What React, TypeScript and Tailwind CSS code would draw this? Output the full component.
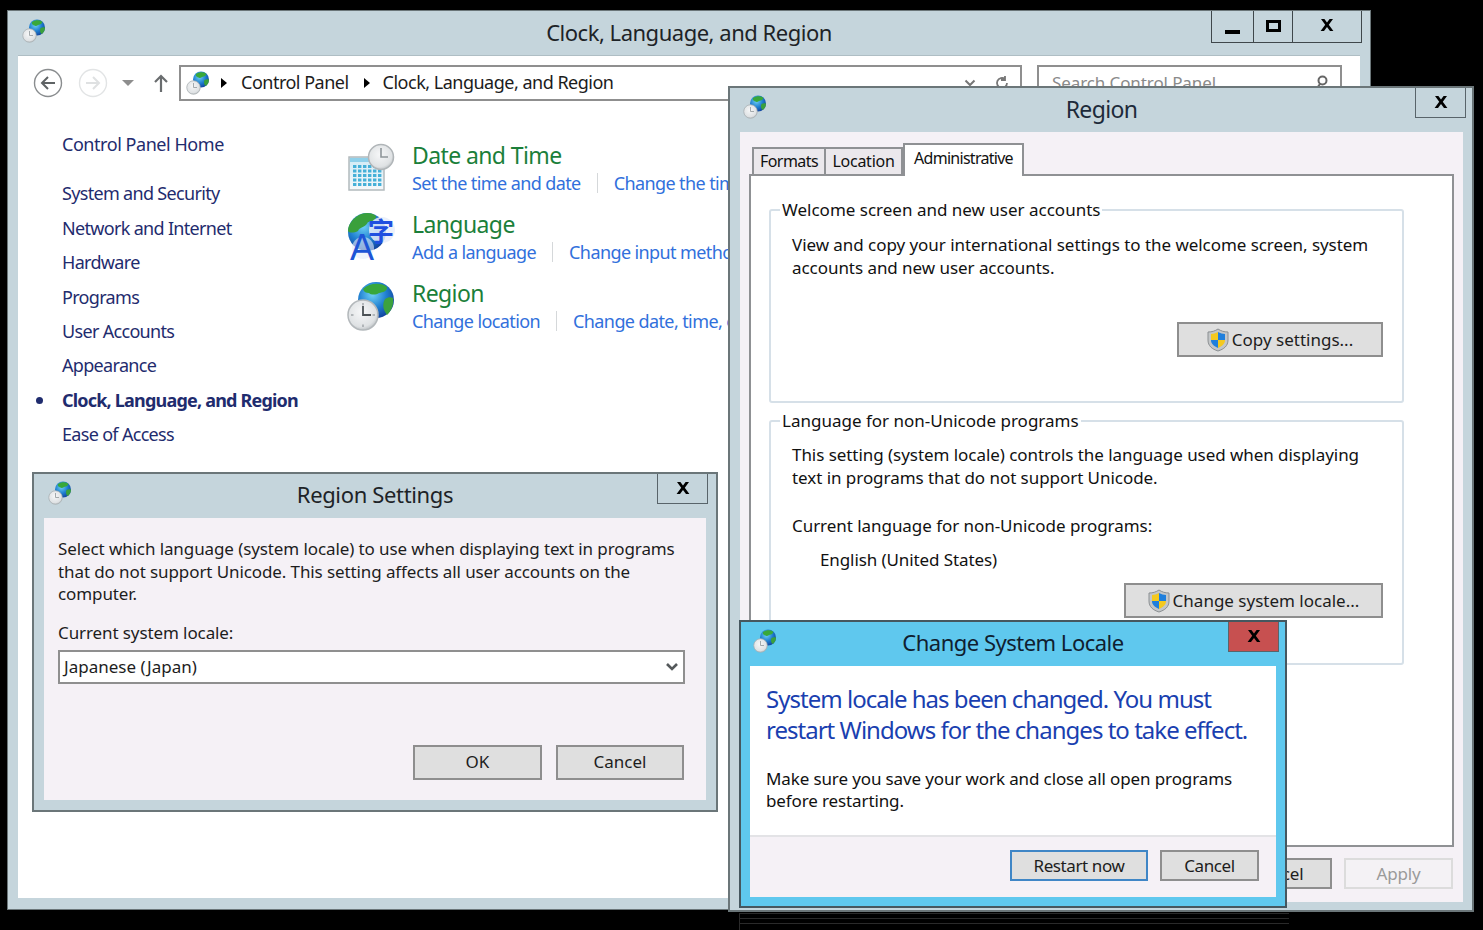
import type { ReactNode } from "react";

// ─── Icons ───────────────────────────────────────────────────────────────────

function Defs() {
  return (
    <svg className="absolute h-0 w-0">
      <defs>
        <radialGradient id="globe" cx="40%" cy="35%" r="70%">
          <stop offset="0%" stopColor="#6fd0f5" />
          <stop offset="55%" stopColor="#1f7fd0" />
          <stop offset="100%" stopColor="#123f9a" />
        </radialGradient>
        <radialGradient id="clock" cx="45%" cy="40%" r="65%">
          <stop offset="0%" stopColor="#f6f7f8" />
          <stop offset="75%" stopColor="#dfe2e4" />
          <stop offset="100%" stopColor="#b4b9bc" />
        </radialGradient>
        <linearGradient id="cal" x1="0" y1="0" x2="0" y2="1">
          <stop offset="0%" stopColor="#cfeaf5" />
          <stop offset="100%" stopColor="#f5f8fa" />
        </linearGradient>
      </defs>
    </svg>
  );
}

function GlobeClock({ size = 24 }: { size?: number }) {
  return (
    <svg width={size} height={size} viewBox="0 0 48 48" className="shrink-0">
      <circle cx="30" cy="17" r="16" fill="url(#globe)" />
      <path d="M20 6c6-4 14-5 20-1 2 4-3 6-8 7-3 3-8 2-9 0-3-1-4-3-3-6z" fill="#39a83a" />
      <path d="M37 18c3-2 6-2 9-1 0 6-3 11-7 13-3-3-4-8-2-12z" fill="#3aa03c" />
      <circle cx="15" cy="33" r="13.5" fill="url(#clock)" stroke="#a7adb0" strokeWidth="1.5" />
      <path d="M15 24v9h7" fill="none" stroke="#9aa0a4" strokeWidth="1.8" />
    </svg>
  );
}

function CalendarClock() {
  return (
    <svg width="48" height="48" viewBox="0 0 48 48" className="shrink-0">
      <rect x="2" y="14" width="35" height="33" fill="url(#cal)" stroke="#b3babd" strokeWidth="1.5" />
      <rect x="3" y="15" width="33" height="4" fill="#8fd0ea" />
      {[0, 1, 2, 3, 4].map((row) =>
        [0, 1, 2, 3, 4, 5].map((col) => (
          <rect
            key={`${row}-${col}`}
            x={6 + col * 5}
            y={22 + row * 4.5}
            width="3.4"
            height="3"
            fill="#45b0d8"
          />
        )),
      )}
      <circle cx="34" cy="14" r="12.5" fill="url(#clock)" stroke="#b0b5b8" strokeWidth="1.5" />
      <path d="M34 5v9h7" fill="none" stroke="#8e9599" strokeWidth="1.6" />
    </svg>
  );
}

function LanguageIcon() {
  return (
    <svg width="48" height="56" viewBox="0 0 48 56" className="shrink-0">
      <circle cx="20" cy="20" r="19" fill="url(#globe)" />
      <path d="M9 5c6-5 16-5 20-1 0 5-5 6-8 6-3 6-9 5-10 9-4 2-9 2-10 0 0-6 4-11 8-14z" fill="#3aa03c" />
      <circle cx="35" cy="18" r="13" fill="#e8edfa" opacity="0.85" />
      <circle cx="16" cy="36" r="11" fill="#e8edfa" opacity="0.6" />
      <text x="21" y="29" fontSize="26" fontWeight="700" fill="#1f4fe0" fontFamily="'Noto Sans CJK SC',sans-serif">字</text>
      <text x="3" y="48" fontSize="36" fill="#1e55d6" fontFamily="'Liberation Sans',sans-serif">A</text>
    </svg>
  );
}

function RegionIcon() {
  return (
    <svg width="48" height="50" viewBox="0 0 48 50" className="shrink-0">
      <circle cx="29" cy="19" r="18" fill="url(#globe)" />
      <path d="M16 8c6-6 18-7 24-2 0 5-4 5-8 6-3 2-8 2-10 0-3 0-5-1-6-4z" fill="#38a73c" />
      <path d="M38 18c3-2 6-2 8-1 1 7-2 13-6 17-4-5-5-11-2-16z" fill="#3ca23e" />
      <circle cx="16" cy="34" r="15" fill="url(#clock)" stroke="#b3b8bb" strokeWidth="1.5" />
      {[0, 90, 180, 270].map((deg) => (
        <path key={deg} d="M16 22v2.5" stroke="#8f9599" strokeWidth="1.2" transform={`rotate(${deg} 16 34)`} />
      ))}
      <path d="M16 25v9h8" fill="none" stroke="#4b5155" strokeWidth="1.8" />
    </svg>
  );
}

function Shield() {
  return (
    <svg width="22" height="24" viewBox="0 0 22 24" className="shrink-0">
      <path d="M11 1c3 2 6 3 10 3v8c0 6-4 9-10 11C5 21 1 18 1 12V4c4 0 7-1 10-3z" fill="#c3c6c8" stroke="#8b8f92" />
      <path d="M11 4c2 1 5 2 7 2v6h-7z" fill="#1f7fdc" />
      <path d="M11 12h7c0 4-3 6-7 8z" fill="#f4c91f" />
      <path d="M11 4c-2 1-5 2-7 2v6h7z" fill="#f4c91f" />
      <path d="M11 12H4c0 4 3 6 7 8z" fill="#1f7fdc" />
    </svg>
  );
}

function CircleArrow({ flip, faint }: { flip?: boolean; faint?: boolean }) {
  return (
    <svg width="30" height="30" viewBox="0 0 30 30" className="shrink-0">
      <circle cx="15" cy="15" r="13.5" fill="#fff" stroke={faint ? "#e2e4e5" : "#8a8d8f"} strokeWidth="1.4" />
      <path
        d={flip ? "M8 15h13M15 9l6 6-6 6" : "M22 15H9M15 9l-6 6 6 6"}
        fill="none"
        stroke={faint ? "#dfe1e2" : "#5f6365"}
        strokeWidth="2"
      />
    </svg>
  );
}

function XGlyph() {
  return (
    <svg width="14" height="12" viewBox="0 0 14 12">
      <path d="M1 0h3.4L7 3.6 9.6 0H13L8.8 5.8 13.4 12H10L7 8 4 12H.6l4.6-6.2z" fill="#000" />
    </svg>
  );
}

function Caret() {
  return <span className="block h-0 w-0 shrink-0 border-y-[5px] border-l-[6px] border-y-transparent border-l-black" />;
}

// ─── Shared bits ─────────────────────────────────────────────────────────────

function CloseButton({ red, className }: { red?: boolean; className: string }) {
  return (
    <div
      className={`absolute top-0 flex h-[30px] w-[51px] items-center justify-center border border-t-0 border-[#59646a] pb-[2px] ${
        red ? "bg-[#c75050]" : "bg-[#c5d5dc]"
      } ${className}`}
    >
      <XGlyph />
    </div>
  );
}

function DialogButton({
  children,
  className,
}: {
  children: ReactNode;
  className: string;
}) {
  return (
    <div
      className={`flex items-center justify-center border-2 border-[#8e8e8e] bg-[#dfdfdf] text-[#1d1d1d] ${className}`}
    >
      {children}
    </div>
  );
}

function LinkRow({
  icon,
  title,
  first,
  second,
}: {
  icon: ReactNode;
  title: string;
  first: string;
  second: string;
}) {
  return (
    <div className="flex h-[69px] whitespace-nowrap">
      <div className="h-[56px] w-[65px] pt-[2px]">{icon}</div>
      <div>
        <div className="pb-[2px] text-[23px] leading-[28px] tracking-[-0.6px] text-[#1b7f3a]">{title}</div>
        <div className="flex items-center text-[18px] leading-[24px] tracking-[-0.6px] text-[#3170dc]">
          <span>{first}</span>
          <span className="mx-[16px] h-[20px] w-[1px] bg-[#d5d8da]" />
          <span>{second}</span>
        </div>
      </div>
    </div>
  );
}

const categories = [
  "System and Security",
  "Network and Internet",
  "Hardware",
  "Programs",
  "User Accounts",
  "Appearance",
  "Clock, Language, and Region",
  "Ease of Access",
];

// ─── Control Panel window ────────────────────────────────────────────────────

function ControlPanel() {
  return (
    <div className="absolute left-[7px] top-[10px] flex h-[900px] w-[1364px] flex-col border border-[#6b7679] bg-[#c5d5dc] px-[10px] pb-[11px]">
      <div className="relative flex h-[44px] shrink-0 items-center justify-center pb-[2px] text-[22px] tracking-[-0.48px] text-[#1d2327]">
        <div className="absolute left-[4px] top-[8px]">
          <GlobeClock />
        </div>
        Clock, Language, and Region
        <div className="absolute right-[-2px] top-[0px] flex h-[32px] w-[151px] border border-t-0 border-[#3f474b]">
          <div className="flex w-[42px] items-end justify-center border-r border-[#3f474b] pb-[8px]">
            <span className="h-[4px] w-[15px] bg-black" />
          </div>
          <div className="flex w-[39px] items-center justify-center border-r border-[#3f474b] pb-[2px]">
            <span className="h-[12px] w-[15px] border-[3px] border-black" />
          </div>
          <div className="flex flex-1 items-center justify-center pb-[3px]">
            <XGlyph />
          </div>
        </div>
      </div>

      <div className="flex min-h-0 flex-1 flex-col border-t border-[#afbec4] bg-white">
        <div className="flex items-center pl-[15px] pt-[9px]">
          <CircleArrow />
          <div className="ml-[15px]">
            <CircleArrow flip faint />
          </div>
          <span className="ml-[14px] h-0 w-0 border-x-[6px] border-t-[6px] border-x-transparent border-t-[#8e8e8e]" />
          <svg width="14" height="20" viewBox="0 0 14 20" className="ml-[20px]">
            <path d="M7 19V3M1 9l6-6 6 6" fill="none" stroke="#6a6d6f" strokeWidth="2.2" />
          </svg>
          <div className="ml-[11px] flex h-[36px] w-[843px] shrink-0 items-center border-2 border-[#8f8f8f] pl-[5px] pr-[10px] text-[18px] tracking-[-0.5px] text-[#1c1c1c]">
            <GlobeClock />
            <span className="ml-[11px]"><Caret /></span>
            <span className="ml-[14px] pb-[2px]">Control Panel</span>
            <span className="ml-[15px]"><Caret /></span>
            <span className="ml-[13px] pb-[2px]">Clock, Language, and Region</span>
            <svg width="12" height="8" viewBox="0 0 12 8" className="ml-auto">
              <path d="M1.5 1.5L6 6l4.500-4.500" fill="none" stroke="#777" strokeWidth="2" />
            </svg>
            <svg width="16" height="16" viewBox="0 0 16 16" className="ml-[18px]">
              <path d="M13 8a5 5 0 1 1-2-4M11 1v4H7" fill="none" stroke="#777" strokeWidth="1.8" />
            </svg>
          </div>
          <div className="ml-[15px] flex h-[36px] w-[305px] shrink-0 items-center justify-between border-2 border-[#8f8f8f] pl-[13px] pr-[11px] text-[17px] tracking-[-0.1px] text-[#8a8a8a]">
            Search Control Panel
            <svg width="14" height="16" viewBox="0 0 14 16">
              <circle cx="7.500" cy="5.500" r="4" fill="none" stroke="#666" strokeWidth="2" />
              <path d="M5 9l-3 4" stroke="#666" strokeWidth="2" />
            </svg>
          </div>
        </div>

        <div className="flex pt-[26px]">
          <nav className="w-[329px] shrink-0 text-[18px] leading-[34.4px] tracking-[-0.68px] text-[#1f2c6e]">
            <div className="mb-[15px] pl-[44px] tracking-[-0.45px]">Control Panel Home</div>
            {categories.map((name) => {
              const active = name.startsWith("Clock");
              return (
                <div key={name} className={`flex items-center pl-[18px] ${active ? "font-bold tracking-[-0.8px]" : ""}`}>
                  <span className="flex w-[26px] shrink-0">
                    {active && <span className="h-[7px] w-[7px] rounded-full bg-[#1f2c6e]" />}
                  </span>
                  {name}
                </div>
              );
            })}
          </nav>
          <div className="pt-[14px]">
            <LinkRow icon={<CalendarClock />} title="Date and Time" first="Set the time and date" second="Change the time zone" />
            <LinkRow icon={<LanguageIcon />} title="Language" first="Add a language" second="Change input methods" />
            <LinkRow icon={<RegionIcon />} title="Region" first="Change location" second="Change date, time, or number formats" />
          </div>
        </div>
      </div>
    </div>
  );
}

// ─── Region Settings dialog ──────────────────────────────────────────────────

function RegionSettings() {
  return (
    <div className="absolute left-[32px] top-[472px] flex h-[340px] w-[686px] flex-col border-2 border-[#6b7679] bg-[#c5d5dc] px-[10px] pb-[10px]">
      <div className="relative flex h-[44px] shrink-0 items-center justify-center pb-[3px] text-[22px] tracking-[-0.35px] text-[#1d2327]">
        <div className="absolute left-[4px] top-[7px]">
          <GlobeClock />
        </div>
        Region Settings
        <CloseButton className="right-[-2px]" />
      </div>
      <div className="flex flex-1 flex-col bg-[#f5f1f6] px-[14px] pt-[20px] text-[17px] leading-[22.5px] text-[#1d1d1d]">
        <p className="tracking-[-0.1px]">
          Select which language (system locale) to use when displaying text in programs that do not support Unicode. This setting affects all user accounts on the computer.
        </p>
        <p className="mt-[16px] tracking-[-0.1px]">Current system locale:</p>
        <div className="mt-[6px] flex h-[34px] w-[627px] items-center justify-between border-2 border-[#8f8f8f] bg-white pl-[4px] pr-[4px]">
          Japanese (Japan)
          <svg width="14" height="10" viewBox="0 0 14 10">
            <path d="M2 2l5 5 5-5" fill="none" stroke="#55595b" strokeWidth="2.6" />
          </svg>
        </div>
        <div className="mt-[61px] flex justify-end gap-[14px] pr-[8px]">
          <DialogButton className="h-[35px] w-[129px]">OK</DialogButton>
          <DialogButton className="h-[35px] w-[128px]">Cancel</DialogButton>
        </div>
      </div>
    </div>
  );
}

// ─── Region properties window ────────────────────────────────────────────────

function Group({
  legend,
  className,
  children,
}: {
  legend: string;
  className: string;
  children: ReactNode;
}) {
  return (
    <fieldset className={`rounded-[3px] border-2 border-[#d6e0e8] ${className}`}>
      <legend className="ml-[9px] px-[2px] text-[17px] leading-[20px]">{legend}</legend>
      <div className="pl-[21px] pr-[19px]">{children}</div>
    </fieldset>
  );
}

function Region() {
  return (
    <div className="absolute left-[728px] top-[86px] flex h-[826px] w-[746px] flex-col border-2 border-[#6b7679] bg-[#c5d5dc] pl-[10px] pr-[9px] pb-[8px]">
      <div className="relative flex h-[44px] shrink-0 items-center justify-center pb-[2px] text-[23px] tracking-[-0.65px] text-[#1d2a3a]">
        <div className="absolute left-[3px] top-[7px]">
          <GlobeClock />
        </div>
        Region
        <CloseButton className="right-[-3px]" />
      </div>
      <div className="flex flex-1 flex-col bg-[#f5f1f6] px-[9px] pt-[11px] text-[#111]">
        <div className="flex h-[31px] items-end pl-[3px] text-[16px]">
          <div className="flex h-[27px] w-[74px] items-center justify-center border-2 border-b-0 border-[#8f9194] bg-[#ebe8ec] pb-[2px] tracking-[-0.55px]">
            Formats
          </div>
          <div className="flex h-[27px] w-[77px] items-center justify-center border-2 border-b-0 border-l-0 border-[#8f9194] bg-[#ebe8ec] pb-[2px] tracking-[-0.25px]">
            Location
          </div>
          <div className="z-10 -mb-[2px] flex h-[33px] w-[121px] items-start justify-center border-2 border-b-0 border-[#8f9194] bg-white pt-[1px] tracking-[-0.72px]">
            Administrative
          </div>
        </div>
        <div className="h-[673px] border-2 border-[#8f9194] bg-white pl-[18px] pr-[48px] pt-[24px] text-[17px] leading-[23px]">
          <Group legend="Welcome screen and new user accounts" className="h-[203px]">
            <p className="pt-[13px] tracking-[-0.05px]">
              View and copy your international settings to the welcome screen, system accounts and new user accounts.
            </p>
            <div className="mt-[43px] flex justify-end">
              <DialogButton className="h-[35px] w-[206px] gap-[3px]">
                <Shield />
                Copy settings...
              </DialogButton>
            </div>
          </Group>
          <Group legend="Language for non-Unicode programs" className="mt-[8px] h-[254px]">
            <p className="pt-[12px] tracking-[-0.05px]">
              This setting (system locale) controls the language used when displaying text in programs that do not support Unicode.
            </p>
            <p className="mt-[25px] tracking-[-0.05px]">Current language for non-Unicode programs:</p>
            <p className="mt-[11px] pl-[28px] tracking-[-0.1px]">English (United States)</p>
            <div className="mt-[12px] flex justify-end">
              <DialogButton className="h-[35px] w-[259px] gap-[3px]">
                <Shield />
                Change system locale...
              </DialogButton>
            </div>
          </Group>
        </div>
        <div className="mt-[11px] flex justify-end gap-[12px] pr-[1px] text-[17px] tracking-[-0.2px]">
          <DialogButton className="h-[31px] w-[100px]">OK</DialogButton>
          <DialogButton className="h-[31px] w-[109px]">Cancel</DialogButton>
          <DialogButton className="h-[31px] w-[109px] !border-[#dcdcdc] !bg-[#f4f2f5] !text-[#9a9a9a]">Apply</DialogButton>
        </div>
      </div>
    </div>
  );
}

// ─── Change System Locale dialog ─────────────────────────────────────────────

function ChangeLocale() {
  return (
    <div className="absolute left-[739px] top-[620px] flex h-[288px] w-[548px] flex-col border-2 border-[#46575f] bg-[#5fc8ee] px-[9px] pb-[9px]">
      <div className="relative flex h-[44px] shrink-0 items-center justify-center pb-[3px] text-[22px] tracking-[-0.5px] text-[#0f2030]">
        <div className="absolute left-[3px] top-[7px]">
          <GlobeClock />
        </div>
        Change System Locale
        <CloseButton red className="right-[-3px]" />
      </div>
      <div className="flex flex-1 flex-col bg-white">
        <div className="h-[169px] shrink-0 px-[16px] pt-[17px]">
          <p className="text-[24px] leading-[31px] tracking-[-0.98px] text-[#1a3fb0]">
            System locale has been changed. You must restart Windows for the changes to take effect.
          </p>
          <p className="mt-[23px] text-[17px] leading-[22px] tracking-[-0.12px] text-[#111]">
            Make sure you save your work and close all open programs before restarting.
          </p>
        </div>
        <div className="flex flex-1 items-start justify-end gap-[12px] border-t-2 border-[#e3e3e6] bg-[#f5f1f6] pr-[17px] pt-[13px] text-[17px] tracking-[-0.4px] text-[#111]">
          <DialogButton className="h-[31px] w-[138px] !border-[#3f86c6]">Restart now</DialogButton>
          <DialogButton className="h-[31px] w-[99px]">Cancel</DialogButton>
        </div>
      </div>
    </div>
  );
}

export default function App() {
  return (
    <div className="relative h-[930px] w-[1483px] overflow-hidden bg-black font-['Noto_Sans',sans-serif]">
      <Defs />
      <ControlPanel />
      <RegionSettings />
      <Region />
      <ChangeLocale />
      {/* ghost lines left under the dialog in the capture */}
      <div className="absolute left-[739px] top-[913px] flex h-[17px] w-[550px] flex-col gap-[4px] border-l border-[#2a2a2a]">
        <span className="h-[1px] bg-[#2a2a2a]" />
        <span className="h-[1px] bg-[#2a2a2a]" />
        <span className="h-[1px] bg-[#2a2a2a]" />
      </div>
    </div>
  );
}
